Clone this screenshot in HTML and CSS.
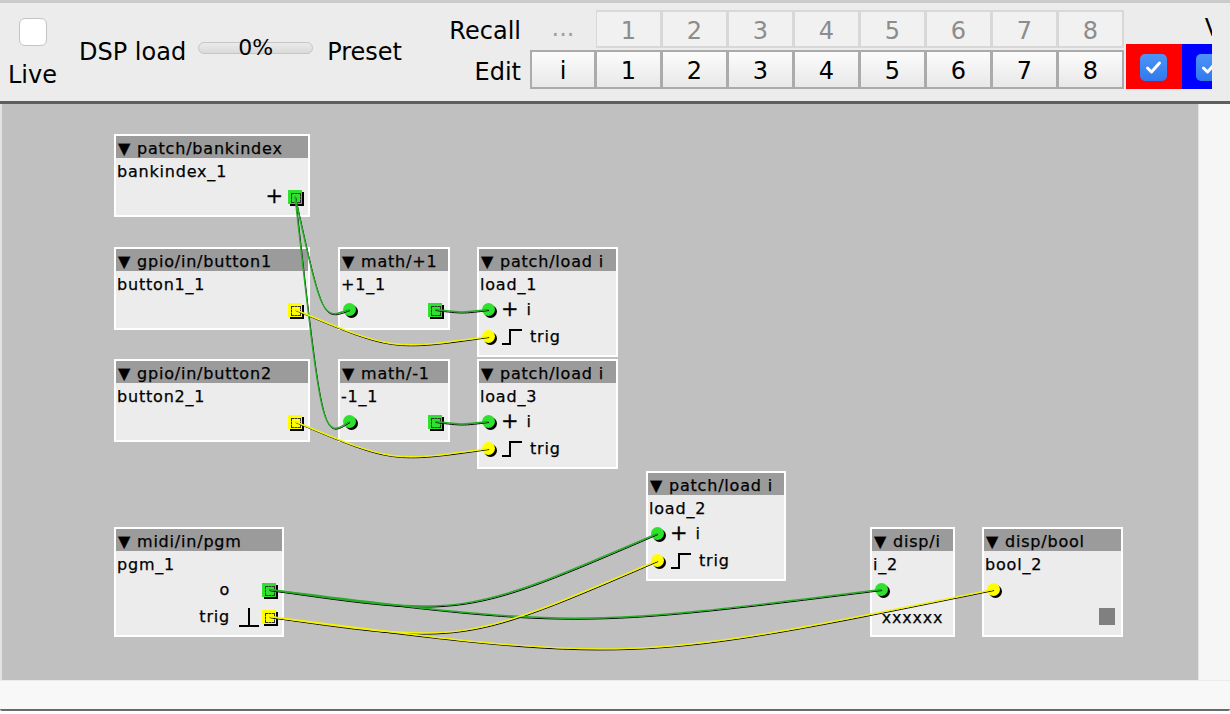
FILE: index.html
```html
<!DOCTYPE html>
<html>
<head>
<meta charset="utf-8">
<title>Patch</title>
<link rel="stylesheet" href="styles.css">
</head>
<body>
<header class="toolbar">
  <div class="tb-inner">
    <div class="live">
      <span class="chk"></span>
      <span class="live-label">Live</span>
    </div>
    <span class="tlabel dsp">DSP load</span>
    <div class="meter"><span>0%</span></div>
    <span class="tlabel preset">Preset</span>
    <div class="presets">
      <span class="rowlbl">Recall</span>
      <span class="dots">...</span>
      <button class="pb dis">1</button>
      <button class="pb dis">2</button>
      <button class="pb dis">3</button>
      <button class="pb dis">4</button>
      <button class="pb dis">5</button>
      <button class="pb dis">6</button>
      <button class="pb dis">7</button>
      <button class="pb dis">8</button>
      <span class="rowlbl">Edit</span>
      <button class="pb first">i</button>
      <button class="pb">1</button>
      <button class="pb">2</button>
      <button class="pb">3</button>
      <button class="pb">4</button>
      <button class="pb">5</button>
      <button class="pb">6</button>
      <button class="pb">7</button>
      <button class="pb">8</button>
    </div>
    <div class="vcol first-vcol">
      <span class="vlabel"></span>
      <div class="vcell red">
        <span class="cb"><svg width="27" height="27" viewBox="0 0 27 27"><path d="M7.5 14 L11.5 18 L19.5 9" fill="none" stroke="#fff" stroke-width="3" stroke-linecap="round" stroke-linejoin="round"/></svg></span>
      </div>
    </div>
    <div class="vcol">
      <span class="vlabel">V</span>
      <div class="vcell blue">
        <span class="cb"><svg width="27" height="27" viewBox="0 0 27 27"><path d="M7.5 14 L11.5 18 L19.5 9" fill="none" stroke="#fff" stroke-width="3" stroke-linecap="round" stroke-linejoin="round"/></svg></span>
      </div>
    </div>
  </div>
</header>

<main class="work">
  <div class="canvas">
    <div class="obj" style="left:114px;top:30px;width:196px">
      <div class="hd">▼ patch/bankindex</div>
      <div class="nm">bankindex_1</div>
      <div class="row r"><span class="pg pre">+</span><span class="outlet g"></span></div>
    </div>

    <div class="obj" style="left:114px;top:143px;width:196px">
      <div class="hd">▼ gpio/in/button1</div>
      <div class="nm">button1_1</div>
      <div class="row r"><span class="outlet y"></span></div>
    </div>

    <div class="obj" style="left:338px;top:143px;width:112px">
      <div class="hd">▼ math/+1</div>
      <div class="nm">+1_1</div>
      <div class="row lr"><span class="inlet g"></span><span class="outlet g"></span></div>
    </div>

    <div class="obj" style="left:477px;top:143px;width:141px">
      <div class="hd">▼ patch/load i</div>
      <div class="nm">load_1</div>
      <div class="row"><span class="inlet g"></span><span class="pg">+</span><span class="lb">i</span></div>
      <div class="row"><span class="inlet y"></span><svg class="step" width="20" height="16" viewBox="0 0 20 16"><path d="M0 15 H8 V1 H20" fill="none" stroke="#000" stroke-width="2"/></svg><span class="lb">trig</span></div>
    </div>

    <div class="obj" style="left:114px;top:255px;width:196px">
      <div class="hd">▼ gpio/in/button2</div>
      <div class="nm">button2_1</div>
      <div class="row r"><span class="outlet y"></span></div>
    </div>

    <div class="obj" style="left:338px;top:255px;width:112px">
      <div class="hd">▼ math/-1</div>
      <div class="nm">-1_1</div>
      <div class="row lr"><span class="inlet g"></span><span class="outlet g"></span></div>
    </div>

    <div class="obj" style="left:477px;top:255px;width:141px">
      <div class="hd">▼ patch/load i</div>
      <div class="nm">load_3</div>
      <div class="row"><span class="inlet g"></span><span class="pg">+</span><span class="lb">i</span></div>
      <div class="row"><span class="inlet y"></span><svg class="step" width="20" height="16" viewBox="0 0 20 16"><path d="M0 15 H8 V1 H20" fill="none" stroke="#000" stroke-width="2"/></svg><span class="lb">trig</span></div>
    </div>

    <div class="obj" style="left:646px;top:367px;width:140px">
      <div class="hd">▼ patch/load i</div>
      <div class="nm">load_2</div>
      <div class="row"><span class="inlet g"></span><span class="pg">+</span><span class="lb">i</span></div>
      <div class="row"><span class="inlet y"></span><svg class="step" width="20" height="16" viewBox="0 0 20 16"><path d="M0 15 H8 V1 H20" fill="none" stroke="#000" stroke-width="2"/></svg><span class="lb">trig</span></div>
    </div>

    <div class="obj" style="left:114px;top:423px;width:170px">
      <div class="hd">▼ midi/in/pgm</div>
      <div class="nm">pgm_1</div>
      <div class="row r"><span class="lb">o</span><span class="gslot"></span><span class="outlet g"></span></div>
      <div class="row r"><span class="lb">trig</span><svg class="gslot" width="22" height="20" viewBox="0 0 22 20"><path d="M1 19 H21 M11 19 V1" fill="none" stroke="#000" stroke-width="2"/></svg><span class="outlet y"></span></div>
    </div>

    <div class="obj" style="left:870px;top:423px;width:85px">
      <div class="hd">▼ disp/i</div>
      <div class="nm">i_2</div>
      <div class="row"><span class="inlet g"></span></div>
      <div class="row c"><span class="disp">xxxxxx</span></div>
    </div>

    <div class="obj" style="left:982px;top:423px;width:141px">
      <div class="hd">▼ disp/bool</div>
      <div class="nm">bool_2</div>
      <div class="row"><span class="inlet y"></span></div>
      <div class="row r"><span class="led"></span></div>
    </div>

    <svg class="wires" width="1198" height="576" viewBox="0 104 1198 576">
      <g class="sh" transform="translate(0.6 1)">
        <path d="M295 196.5 C322.25 320 322.25 320 349.5 309.5"/>
        <path d="M295 196.5 C322.25 439 322.25 439 349.5 421.5"/>
        <path d="M435 309.5 C461.75 312.8 461.75 312.8 488.5 309.5"/>
        <path d="M435 421.5 C461.75 424.8 461.75 424.8 488.5 421.5"/>
        <path d="M295 309.5 C391.75 350.3 391.75 350.3 488.5 336.5"/>
        <path d="M295 421.5 C391.75 462.3 391.75 462.3 488.5 448.5"/>
        <path d="M269 589.5 C463.25 617.3 463.25 617.3 657.5 533.5"/>
        <path d="M269 589.5 C575.25 627.8 575.25 627.8 881.5 589.5"/>
        <path d="M269 616.5 C463.25 644.3 463.25 644.3 657.5 560.5"/>
        <path d="M269 616.5 C631.25 663.5 631.25 663.5 993.5 589.5"/>
      </g>
      <g class="gw">
        <path d="M295 196.5 C322.25 320 322.25 320 349.5 309.5"/>
        <path d="M295 196.5 C322.25 439 322.25 439 349.5 421.5"/>
        <path d="M435 309.5 C461.75 312.8 461.75 312.8 488.5 309.5"/>
        <path d="M435 421.5 C461.75 424.8 461.75 424.8 488.5 421.5"/>
        <path d="M269 589.5 C463.25 617.3 463.25 617.3 657.5 533.5"/>
        <path d="M269 589.5 C575.25 627.8 575.25 627.8 881.5 589.5"/>
      </g>
      <g class="yw">
        <path d="M295 309.5 C391.75 350.3 391.75 350.3 488.5 336.5"/>
        <path d="M295 421.5 C391.75 462.3 391.75 462.3 488.5 448.5"/>
        <path d="M269 616.5 C463.25 644.3 463.25 644.3 657.5 560.5"/>
        <path d="M269 616.5 C631.25 663.5 631.25 663.5 993.5 589.5"/>
      </g>
    </svg>
  </div>
  <div class="vscroll"></div>
</main>
<div class="hscroll"></div>
<div class="winedge"></div>
</body>
</html>
```

FILE: styles.css
```css
* { box-sizing: border-box; }
html, body { margin: 0; padding: 0; }
body {
  width: 1230px;
  height: 714px;
  overflow: hidden;
  background: #ffffff;
  font-family: "DejaVu Sans", "Liberation Sans", sans-serif;
  color: #000;
}

/* ---------- toolbar ---------- */
.toolbar {
  height: 104px;
  background: #ececec;
  border-top: 3px solid #cbcbcb;
  border-bottom: 3px solid #5e5e5e;
}
.tb-inner {
  width: 1212px;
  height: 98px;
  overflow: hidden;
  display: flex;
  align-items: flex-start;
  font-size: 24px;
  line-height: 28px;
}
.live {
  margin-left: 8px;
  display: flex;
  flex-direction: column;
  align-items: center;
  flex: none;
}
.chk {
  width: 28px;
  height: 28px;
  margin-top: 15px;
  margin-bottom: 15px;
  background: #fff;
  border: 1px solid #c4c4c4;
  border-radius: 6px;
}
.tlabel { white-space: nowrap; flex: none; margin-top: 35px; }
.dsp { margin-left: 22px; }
.meter {
  flex: none;
  margin-left: 12px;
  margin-top: 39px;
  width: 115px;
  height: 12px;
  border: 1px solid #c6c6c6;
  border-radius: 6px;
  background: linear-gradient(#ebebeb, #dadada);
  display: flex;
  align-items: center;
  justify-content: center;
}
.meter span { font-size: 22px; line-height: 28px; white-space: nowrap; }
.preset { margin-left: 14px; }
.presets {
  flex: none;
  margin-left: 45px;
  margin-top: 7px;
  display: grid;
  grid-template-columns: 83px repeat(9, 66px);
  grid-template-rows: 38px 39px;
  row-gap: 2px;
}
.rowlbl {
  text-align: right;
  padding-right: 9px;
  align-self: end;
  margin-bottom: 3px;
}
.dots {
  color: #a0a0a0;
  text-align: center;
  align-self: end;
  margin-bottom: 6px;
}
.pb {
  font: inherit;
  margin: 0;
  padding: 3px 0 0 0;
  display: flex;
  align-items: center;
  justify-content: center;
  border: 2px solid #ababab;
  border-left-width: 1px;
  background: linear-gradient(#fcfcfc, #e8e8e8);
  color: #000;
}
.pb.first { border-left-width: 2px; }
.pb.dis {
  border-color: #d8d8d8;
  background: #f1f1f1;
  color: #8c8c8c;
}
.vcol {
  flex: none;
  width: 56px;
  margin-top: 11px;
  display: flex;
  flex-direction: column;
}
.first-vcol { margin-left: 2px; }
.vlabel {
  height: 28px;
  margin-bottom: 2px;
  text-align: center;
  padding-left: 6px;
}
.vcell {
  height: 45px;
  display: flex;
  align-items: center;
  justify-content: center;
  padding-top: 2px;
}
.vcell.red { background: #ff0000; }
.vcell.blue { background: #0000ff; }
.cb {
  width: 27px;
  height: 27px;
  border-radius: 5px;
  background: linear-gradient(#4d94f8, #2f79ee);
  display: flex;
}

/* ---------- work area ---------- */
.work { display: flex; height: 576px; }
.canvas {
  position: relative;
  flex: none;
  width: 1198px;
  height: 576px;
  background: #c0c0c0;
  box-shadow: inset 2px 0 0 #e2e2e2;
  overflow: hidden;
}
.vscroll {
  flex: 1;
  background: #f6f6f6;
  border-left: 1px solid #e4e4e4;
}
.hscroll {
  height: 29px;
  background: #f8f8f8;
  border-top: 1px solid #ececec;
}
.winedge {
  height: 2px;
  background: #6a6a6a;
  border-radius: 0 0 3px 3px;
}

/* ---------- objects ---------- */
.obj {
  position: absolute;
  background: #ececec;
  border: 2px solid #ffffff;
  font-size: 16px;
  letter-spacing: 0.8px;
  line-height: 25px;
  padding-bottom: 5px;
  -webkit-text-stroke: 0.25px #000;
}
.hd {
  height: 22px;
  background: #9b9b9b;
  padding: 3px 0 0 2px;
  line-height: 19px;
  white-space: nowrap;
  overflow: hidden;
}
.nm {
  height: 25px;
  padding: 3px 0 0 1px;
  line-height: 22px;
  white-space: nowrap;
}
.row { height: 27px; display: flex; align-items: center; }
.row.r { justify-content: flex-end; }
.row.lr { justify-content: space-between; }
.row.c { justify-content: center; }
.inlet {
  flex: none;
  width: 13px;
  height: 13px;
  border-radius: 50%;
  margin-left: 3px;
  box-shadow: 2px 2px 0 #000;
}
.outlet {
  flex: none;
  position: relative;
  width: 14px;
  height: 14px;
  margin-right: 6px;
  box-shadow: 2px 2px 0 #000;
}
.outlet::after {
  content: "";
  position: absolute;
  left: 3px;
  top: 3px;
  width: 8px;
  height: 8px;
  border: 1px dashed #333;
}
.g { background: #2fe02f; }
.y { background: #ffff00; }
.pg { font-size: 21px; line-height: 1; margin-left: 6px; letter-spacing: 0; }
.pg.pre { margin-left: 0; margin-right: 5px; }
.step { flex: none; margin-left: 7px; }
.lb { margin-left: 8px; white-space: nowrap; }
.row.r .lb { margin-left: 0; }
.gslot { flex: none; display: block; width: 22px; height: 20px; margin-left: 8px; margin-right: 2px; }
.disp { white-space: nowrap; padding-top: 2px; }
.led {
  width: 16px;
  height: 17px;
  margin-right: 6px;
  background: #808080;
}

.wires {
  position: absolute;
  left: 0;
  top: 0;
  pointer-events: none;
}
.wires path { fill: none; }
.wires .sh path { stroke: #000; stroke-width: 1; }
.wires .gw path { stroke: #25ad25; stroke-width: 1.4; }
.wires .yw path { stroke: #f4f400; stroke-width: 1.4; }
```
